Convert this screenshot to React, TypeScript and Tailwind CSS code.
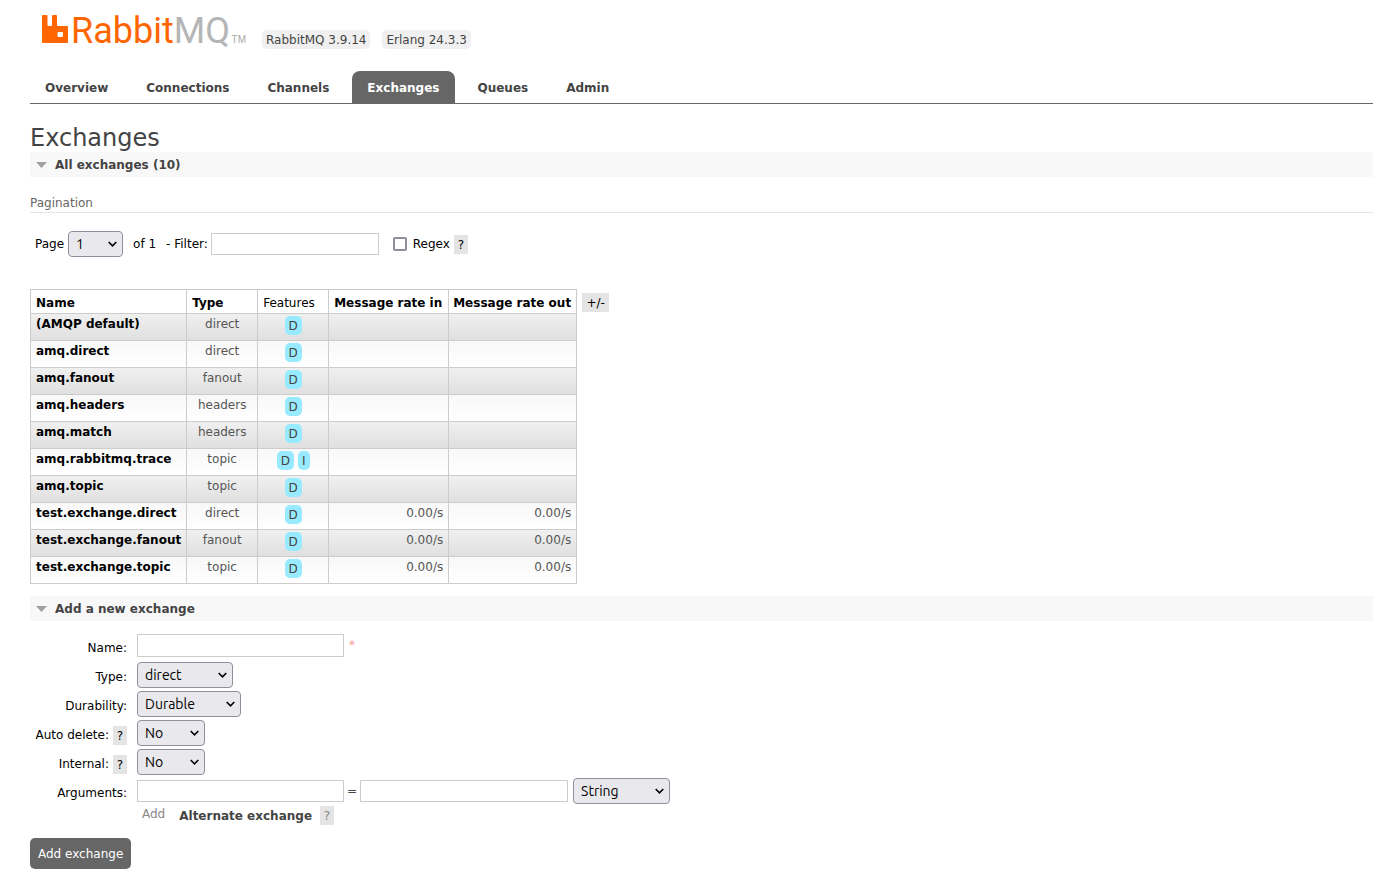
import React, { useState } from "react";

type Exchange = {
  name: string;
  type: string;
  features: string[];
  rateIn?: string;
  rateOut?: string;
};

const tabs = ["Overview", "Connections", "Channels", "Exchanges", "Queues", "Admin"];

const exchanges: Exchange[] = [
  { name: "(AMQP default)", type: "direct", features: ["D"] },
  { name: "amq.direct", type: "direct", features: ["D"] },
  { name: "amq.fanout", type: "fanout", features: ["D"] },
  { name: "amq.headers", type: "headers", features: ["D"] },
  { name: "amq.match", type: "headers", features: ["D"] },
  { name: "amq.rabbitmq.trace", type: "topic", features: ["D", "I"] },
  { name: "amq.topic", type: "topic", features: ["D"] },
  { name: "test.exchange.direct", type: "direct", features: ["D"], rateIn: "0.00/s", rateOut: "0.00/s" },
  { name: "test.exchange.fanout", type: "fanout", features: ["D"], rateIn: "0.00/s", rateOut: "0.00/s" },
  { name: "test.exchange.topic", type: "topic", features: ["D"], rateIn: "0.00/s", rateOut: "0.00/s" },
];

const inputClass = "border border-[#cccccc] bg-white px-1 text-xs text-black outline-none";

function Select({ id, options, width, label }: { id: string; options: string[]; width: string; label?: string }) {
  return (
    <span className={`relative inline-block h-[26px] ${width}`}>
      <select
        id={id}
        aria-label={label}
        className="block h-full w-full appearance-none rounded-[4px] border border-[#8f8f9d] bg-[#e9e9ed] pb-px pl-[7px] font-['Ubuntu','Noto_Sans',sans-serif] text-[14px] leading-[18px] text-black"
      >
        {options.map((o) => (
          <option key={o}>{o}</option>
        ))}
      </select>
      <svg className="pointer-events-none absolute top-[10px] right-[6px]" width="9" height="7" viewBox="0 0 9 7" fill="none" stroke="#000" strokeWidth="1.6">
        <path d="M0.7 1 L4.5 4.8 L8.3 1" />
      </svg>
    </span>
  );
}

function Help({ muted = false }: { muted?: boolean }) {
  return (
    <button type="button" aria-label="Help" className={`h-[19px] w-[14px] bg-[#e4e4e4] pt-px text-xs ${muted ? "text-[#888888]" : "text-black"}`}>
      ?
    </button>
  );
}

function SectionHeader({ children }: { children: React.ReactNode }) {
  return (
    <h2 className="flex h-[25px] items-center bg-[#f8f8f8] pl-[6px] text-xs font-bold text-[#444444]">
      <svg className="mr-2" width="11" height="6" viewBox="0 0 11 6">
        <path d="M0 0H11L5.5 6Z" fill="#a0a0a0" />
      </svg>
      {children}
    </h2>
  );
}

function Field({ label, htmlFor, help, children }: { label: string; htmlFor: string; help?: boolean; children: React.ReactNode }) {
  return (
    <div className="flex h-[26px] items-start gap-[10px]">
      <div className="flex w-[97px] shrink-0 items-center justify-end gap-1 pt-[6px]">
        <label htmlFor={htmlFor} className="text-xs leading-[19px] whitespace-nowrap text-black">
          {label}
        </label>
        {help && <Help />}
      </div>
      {children}
    </div>
  );
}

export default function App() {
  const [active, setActive] = useState("Exchanges");
  return (
    <div className="bg-white pb-4 pl-[30px] font-['DejaVu_Sans',sans-serif] text-xs text-[#444444]">
      <header className="flex h-[71px] items-start pl-3">
        <a href="#/" aria-label="RabbitMQ home" className="flex w-[204px] items-start pt-[15px]">
          <svg className="shrink-0" width="26" height="28" viewBox="0 0 26 28">
            <path
              fill="#ff6600"
              fillRule="evenodd"
              d="M1 0H4.5Q5.5 0 5.5 1V10Q5.5 11 6.5 11H9Q10 11 10 10V1Q10 0 11 0H14Q15 0 15 1V10Q15 11 16 11H25Q26 11 26 12V27Q26 28 25 28H1Q0 28 0 27V1Q0 0 1 0ZM16.5 17Q15.5 17 15.5 18V21Q15.5 22 16.5 22H20Q21 22 21 21V18Q21 17 20 17Z"
            />
          </svg>
          <span className="pl-[3px] font-['Roboto',sans-serif] text-[36px] leading-8 text-[#ff6600]">
            Rabbit<span className="text-[#b5b5b5]">MQ</span>
          </span>
          <span className="ml-auto pt-[18px] font-['Liberation_Sans',sans-serif] text-[10px] leading-[13px] text-[#a8a8a8]">TM</span>
        </a>
        <div className="flex gap-3 pt-[30px] pl-4">
          <span className="rounded-[5px] bg-[#f0f0f0] px-1 pt-px leading-[18px]">RabbitMQ 3.9.14</span>
          <span className="rounded-[5px] bg-[#f0f0f0] px-1 pt-px leading-[18px]">Erlang 24.3.3</span>
        </div>
      </header>

      <nav className="flex gap-[7px] border-b border-[#666666]">
        {tabs.map((t) => (
          <a
            key={t}
            href={`#/${t.toLowerCase()}`}
            onClick={() => setActive(t)}
            className={`rounded-t-[8px] pt-[2px] pr-4 pl-[15px] text-xs leading-[30px] font-bold ${t === active ? "bg-[#666666] text-white" : "text-[#444444]"}`}
          >
            {t}
          </a>
        ))}
      </nav>

      <main>
        <h1 className="pt-5 text-2xl leading-[28px]">Exchanges</h1>
        <SectionHeader>All exchanges (10)</SectionHeader>

        <h3 className="mt-[17px] border-b border-[#e4e4e4] leading-[18px] text-[#666666]">Pagination</h3>

        <div className="mt-[18px] flex h-[26px] items-center pl-[5px] text-black">
          <label htmlFor="page" className="pr-1">Page</label>
          <Select id="page" options={["1"]} width="w-[55px]" />
          <span className="pl-[10px]">of 1</span>
          <label htmlFor="filter" className="pr-[3px] pl-[10px]">- Filter:</label>
          <input id="filter" type="text" className={`${inputClass} h-[22px] w-[168px]`} />
          <input id="regex" type="checkbox" className="ml-[14px] h-[14px] w-[14px] appearance-none rounded-[2px] border-2 border-[#8f8f9d] bg-white checked:bg-[#8f8f9d]" />
          <label htmlFor="regex" className="pr-1 pl-[6px]">Regex</label>
          <Help />
        </div>

        <div className="mt-8 flex items-start gap-[5px]">
          <table className="border-collapse">
            <thead>
              <tr className="h-6 text-black [&>th]:border [&>th]:border-[#cccccc] [&>th]:px-[5px] [&>th]:pt-[2px] [&>th:last-child]:pl-1">
                <th className="w-[156px] text-left">Name</th>
                <th className="w-[71px] text-left">Type</th>
                <th className="w-[71px] text-left font-normal">Features</th>
                <th className="w-[120px] text-left whitespace-nowrap">Message rate in</th>
                <th className="w-[128px] text-left whitespace-nowrap">Message rate out</th>
              </tr>
            </thead>
            <tbody>
              {exchanges.map((e) => (
                <tr
                  key={e.name}
                  className="h-[27px] bg-linear-to-b from-[#f8f8f8] to-white align-top leading-[21px] odd:from-[#f0f0f0] odd:to-[#dfdfdf] [&>td]:border [&>td]:border-[#cccccc] [&>td]:px-[5px]"
                >
                  <td className="font-bold whitespace-nowrap text-black">
                    <a href={`#/exchanges/${encodeURIComponent(e.name)}`}>{e.name}</a>
                  </td>
                  <td className="text-center text-[#555555]">{e.type}</td>
                  <td>
                    <div className="flex justify-center gap-1 pt-[2px]">
                      {e.features.map((f) => (
                        <span key={f} className="rounded-[5px] bg-[#98ebff] px-1 pt-px leading-[18px]">{f}</span>
                      ))}
                    </div>
                  </td>
                  <td className="text-right text-[#555555]">{e.rateIn}</td>
                  <td className="text-right text-[#555555]">{e.rateOut}</td>
                </tr>
              ))}
            </tbody>
          </table>
          <button type="button" className="mt-1 h-[19px] w-[27px] bg-[#e4e4e4] text-xs text-black">+/-</button>
        </div>

        <div className="mt-3">
          <SectionHeader>Add a new exchange</SectionHeader>
        </div>

        <form className="pt-3" onSubmit={(ev) => ev.preventDefault()}>
          <div className="flex flex-col gap-[3px]">
            <Field label="Name:" htmlFor="name">
              <div className="flex items-start gap-[5px]">
                <input id="name" type="text" className={`${inputClass} mt-px h-[23px] w-[207px]`} />
                <span className="leading-[24px] text-[#ff9999]">*</span>
              </div>
            </Field>
            <Field label="Type:" htmlFor="type">
              <Select id="type" options={["direct", "fanout", "headers", "topic"]} width="w-[96px]" />
            </Field>
            <Field label="Durability:" htmlFor="durability">
              <Select id="durability" options={["Durable", "Transient"]} width="w-[104px]" />
            </Field>
            <Field label="Auto delete:" htmlFor="auto-delete" help>
              <Select id="auto-delete" options={["No", "Yes"]} width="w-[68px]" />
            </Field>
            <Field label="Internal:" htmlFor="internal" help>
              <Select id="internal" options={["No", "Yes"]} width="w-[68px]" />
            </Field>
            <Field label="Arguments:" htmlFor="arg-key">
              <div className="flex h-[26px] items-center">
                <input id="arg-key" type="text" className={`${inputClass} h-[22px] w-[207px]`} />
                <span className="px-[3px]">=</span>
                <input aria-label="Argument value" type="text" className={`${inputClass} mr-[5px] h-[22px] w-[208px]`} />
                <Select id="arg-type" label="Argument type" options={["String", "Number", "Boolean", "List"]} width="w-[97px]" />
              </div>
            </Field>
          </div>
          <div className="mt-[2px] flex h-[19px] items-start pl-[112px] leading-5">
            <span className="leading-4 text-[#888888]">Add</span>
            <a href="#/alternate-exchange" className="pr-2 pl-[14px] font-bold">Alternate exchange</a>
            <Help muted />
          </div>
          <button type="submit" className="mt-[13px] h-[31px] rounded-[5px] bg-[#666666] px-2 text-xs text-white">
            Add exchange
          </button>
        </form>
      </main>
    </div>
  );
}
